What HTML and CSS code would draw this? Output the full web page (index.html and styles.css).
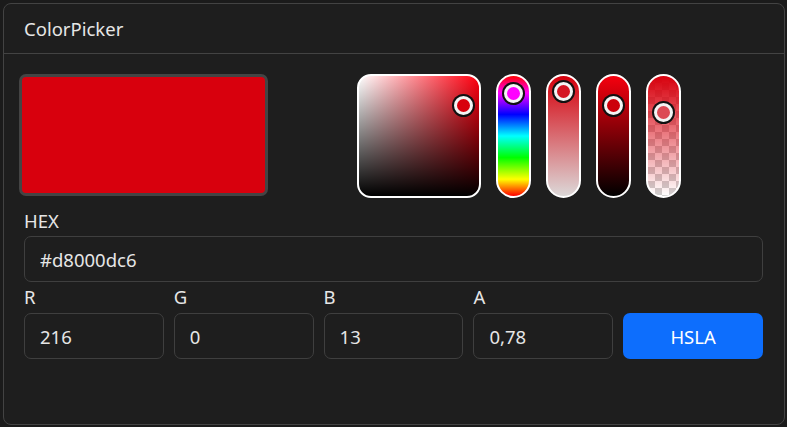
FILE: index.html
```html
<!DOCTYPE html>
<html lang="en">
<head>
<meta charset="utf-8">
<title>ColorPicker</title>
<link rel="stylesheet" href="styles.css">
</head>
<body>
<div class="card">
  <div class="card-header">ColorPicker</div>
  <div class="card-body">
    <div class="picker-row">
      <div class="swatch"></div>
      <div class="controls">
        <div class="sv-area">
          <span class="thumb" style="left:104px;top:29px;background:#d8000d"></span>
        </div>
        <div class="slider hue">
          <span class="thumb" style="top:17px;background:#ff00ff"></span>
        </div>
        <div class="slider sat">
          <span class="thumb" style="top:15px;background:#d51523"></span>
        </div>
        <div class="slider light">
          <span class="thumb" style="top:29px;background:#cc000b"></span>
        </div>
        <div class="slider alpha">
          <span class="thumb" style="top:36px;background:#dc4a55"></span>
        </div>
      </div>
    </div>
    <div class="form">
      <div class="field">
        <label class="label">HEX</label>
        <input class="input" type="text" value="#d8000dc6">
      </div>
      <div class="channels">
        <div class="field">
          <label class="label">R</label>
          <input class="input" type="text" value="216">
        </div>
        <div class="field">
          <label class="label">G</label>
          <input class="input" type="text" value="0">
        </div>
        <div class="field">
          <label class="label">B</label>
          <input class="input" type="text" value="13">
        </div>
        <div class="field">
          <label class="label">A</label>
          <input class="input" type="text" value="0,78">
        </div>
        <div class="field field-end">
          <button class="btn" type="button">HSLA</button>
        </div>
      </div>
    </div>
  </div>
</div>
</body>
</html>
```

FILE: styles.css
```css
* { box-sizing: border-box; }

html, body {
  margin: 0;
  background: #1b1b1b;
}

body {
  padding: 3px 2px 2px 3px;
  font-family: "Noto Sans", "Open Sans", sans-serif;
  color: #e4e4e4;
}

.card {
  height: 422px;
  background: #1e1e1e;
  border: 1px solid #434343;
  border-radius: 8px;
}

.card-header {
  height: 50px;
  padding-left: 20px;
  border-bottom: 1px solid #434343;
  font-size: 18.5px;
  line-height: 49px;
  color: #e6e6e6;
}

.card-body {
  padding: 20px 21px 0 15px;
}

.picker-row {
  display: flex;
  align-items: flex-start;
}

.swatch {
  width: 249px;
  height: 122px;
  background: #d8000d;
  border: 3px solid #444444;
  border-radius: 7px;
  margin-right: 89px;
}

.controls {
  display: flex;
  gap: 15px;
}

.sv-area {
  position: relative;
  width: 124px;
  height: 124px;
  border: 2px solid #ffffff;
  border-radius: 14px;
  background:
    linear-gradient(to top, #000000, rgba(0, 0, 0, 0)),
    linear-gradient(to right, #ffffff, #ff0010);
}

.slider {
  position: relative;
  width: 35px;
  height: 124px;
  border: 2px solid #ffffff;
  border-radius: 18px;
}

.hue {
  background: linear-gradient(to bottom, #ff0000 0%, #ff00ff 14%, #0000ff 32%, #00ffff 50%, #00ff00 68%, #ffff00 86%, #ff0000 100%);
}

.sat {
  background: linear-gradient(to bottom, #d5000c, #dcd8d8);
}

.light {
  background: linear-gradient(to bottom, #f5000e, #000000);
}

.alpha {
  background:
    linear-gradient(to bottom, rgba(216, 0, 13, 1), rgba(216, 0, 13, 0)),
    conic-gradient(#cfcfcf 25%, #ffffff 0 50%, #cfcfcf 0 75%, #ffffff 0) 0 0 / 14px 14px;
}

.thumb {
  position: absolute;
  left: 50%;
  width: 19px;
  height: 19px;
  margin: -9.5px 0 0 -9.5px;
  border: 3px solid #f4f4f4;
  border-radius: 50%;
  box-shadow: 0 0 0 2px #111111;
}

.form {
  padding-left: 5px;
  margin-top: 10px;
}

.field {
  display: flex;
  flex-direction: column;
}

.label {
  font-size: 18.5px;
  line-height: 26px;
  margin-bottom: 2px;
  color: #e6e6e6;
}

.channels {
  display: grid;
  grid-template-columns: repeat(5, 1fr);
  gap: 10px;
  margin-top: 2px;
}

.channels .label {
  margin-bottom: 3px;
}

.field-end {
  justify-content: flex-end;
}

.input {
  height: 46px;
  width: 100%;
  padding: 0 15px;
  background: #1e1e1e;
  border: 1px solid #3f3f3f;
  border-radius: 7px;
  font-family: inherit;
  font-size: 18.5px;
  color: #e6e6e6;
  outline: none;
}

.btn {
  height: 46px;
  width: 100%;
  border: none;
  border-radius: 7px;
  background: #0d6efd;
  color: #ffffff;
  font-family: inherit;
  font-size: 18.5px;
}
```
